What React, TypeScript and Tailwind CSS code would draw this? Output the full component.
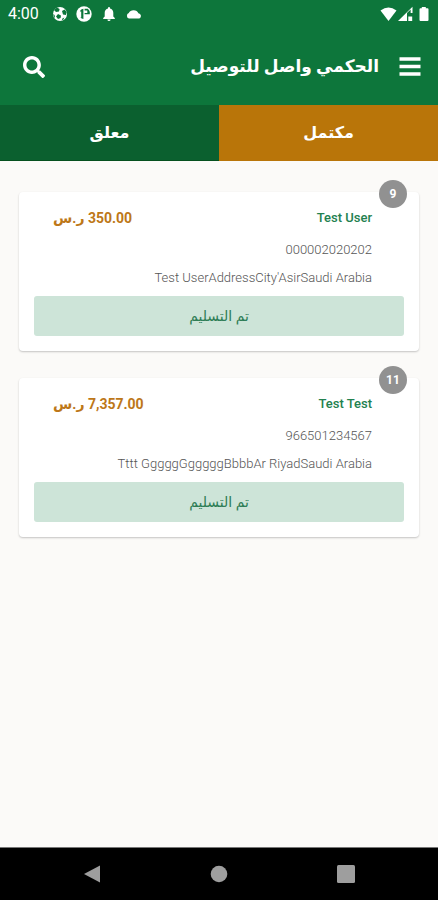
import { FaSearch } from "react-icons/fa";

interface Order {
  id: number;
  name: string;
  phone: string;
  address: string;
  price: string;
}

const orders: Order[] = [
  {
    id: 9,
    name: "Test User",
    phone: "000002020202",
    address: "Test UserAddressCity'AsirSaudi Arabia",
    price: "350.00",
  },
  {
    id: 11,
    name: "Test Test",
    phone: "966501234567",
    address: "Tttt GggggGgggggBbbbAr RiyadSaudi Arabia",
    price: "7,357.00",
  },
];

function StatusBar() {
  return (
    <div dir="ltr" className="flex h-7 items-center justify-between px-2 text-white">
      <div className="flex items-center">
        <span className="w-11 text-base leading-7">4:00</span>
        <svg className="size-4" viewBox="0 0 16 16" aria-hidden="true">
          <circle cx="8" cy="8" r="7" fill="currentColor" />
          <path
            d="M5 1.6 7.6 3 7 5.4 4 6 2 4ZM10 5l2.6-1.4L14.6 6 14 9l-3-.6ZM6 8l3 1.4L8.6 12 6 13 4 10.6ZM1.2 8l1.4 1 .4 2.4-1 .2ZM10.4 12.4l2-.8-1 2-1.6.6Z"
            fill="#0d763b"
          />
        </svg>
        <svg className="ml-2 size-4" viewBox="0 0 16 16" aria-hidden="true">
          <circle cx="8" cy="8" r="7.7" fill="currentColor" />
          <path
            d="M7.4 2.8C4.800 3 3.600 5 3.600 8s1.200 4.800 3.800 5.100V2.800ZM8.600 2.800h3.200a5 5 0 0 1 2 3.200v2.200H8.600V7h2.700V4.400H8.600Z"
            fill="#0d763b"
          />
          <path d="M2.500 5.500h2.700v6H2.500Z" fill="currentColor" />
        </svg>
        <svg className="ml-[9px] size-4" viewBox="0 0 16 16" aria-hidden="true">
          <path
            d="M8 1a1 1 0 0 1 1 1v.5c2 .5 3.300 2.200 3.300 4.300V10.500l1.500 1.600v.8H2.200v-.8l1.500-1.600V6.800C3.700 4.700 5 3 7 2.500V2a1 1 0 0 1 1-1ZM6.400 13.500h3.200a1.600 1.600 0 0 1-3.200 0Z"
            fill="currentColor"
          />
        </svg>
        <svg className="ml-[9px] size-4" viewBox="0 0 16 16" aria-hidden="true">
          <path
            d="M3 12.600a2.900 2.900 0 0 1-.2-5.500A5.200 4.800 0 0 1 12.400 7.300 2.800 2.800 0 0 1 13.400 12.600Z"
            fill="currentColor"
          />
        </svg>
      </div>
      <div className="flex items-center">
        <svg className="h-4 w-[17px]" viewBox="0 0 17 16" aria-hidden="true">
          <path d="M.5 4.500Q8.500-1.500 16.500 4.500L8.500 15Z" fill="currentColor" />
        </svg>
        <svg className="ml-px size-4" viewBox="0 0 16 16" aria-hidden="true">
          <path d="M0 15 14.500.8V7H9v8Z" fill="currentColor" />
          <path d="M9 8.500V7L12.600 3.600V7Z" fill="#0d763b" />
          <path d="M10.300 10.500h3.900v4.500h-3.900Z" fill="currentColor" />
        </svg>
        <svg className="ml-1 h-4 w-3" viewBox="0 0 12 16" aria-hidden="true">
          <path
            d="M3.800 1h4v1.300H9.500a1 1 0 0 1 1 1V14a1 1 0 0 1-1 1h-7a1 1 0 0 1-1-1V3.300a1 1 0 0 1 1-1h1.300Z"
            fill="currentColor"
          />
        </svg>
      </div>
    </div>
  );
}

function OrderCard({ order }: { order: Order }) {
  return (
    <li className="relative rounded bg-white px-[15px] pb-[15px] pt-3 shadow-[0_1px_2px_rgba(0,0,0,0.22)]">
      <span className="absolute -top-3 right-3 flex size-7 items-center justify-center rounded-full bg-[#919191] text-xs font-bold text-white">
        {order.id}
      </span>
      <div className="px-8">
        <div className="flex items-center justify-between">
          <h2 dir="ltr" className="text-[13px] font-medium leading-7 text-[#23814f]">
            {order.name}
          </h2>
          <p className="-ml-[13px] text-sm font-bold leading-7 text-[#bd7718]">
            <bdi>{order.price}</bdi> ر.س
          </p>
        </div>
        <p className="mt-1 text-[13px] font-light leading-7 text-[#555555]">
          <bdi>{order.phone}</bdi>
        </p>
        <p className="text-[13px] font-light leading-7 text-[#555555]">
          <bdi>{order.address}</bdi>
        </p>
      </div>
      <button
        type="button"
        className="mt-1 block h-10 w-full rounded-[3px] bg-[#cde4d8] text-sm font-medium text-[#2e7d55]"
      >
        تم التسليم
      </button>
    </li>
  );
}

export default function App() {
  return (
    <div
      dir="rtl"
      className="flex min-h-screen flex-col bg-[#fbfaf8] font-[Roboto,'DejaVu_Sans',sans-serif]"
    >
      <header className="bg-[#0d763b]">
        <StatusBar />
        <div className="flex h-[77px] items-center px-[17px] text-white">
          <button type="button" aria-label="القائمة">
            <svg className="size-[22px]" viewBox="0 0 22 22" aria-hidden="true">
              <path d="M.5 1.200h21v3.600H.5ZM.5 8.700h21v3.600H.5ZM.5 16.200h21v3.600H.5Z" fill="currentColor" />
            </svg>
          </button>
          <h1 className="mr-5 text-[17px] font-bold">الحكمي واصل للتوصيل</h1>
          <button type="button" aria-label="بحث" className="mr-auto ml-1.5">
            <FaSearch className="size-[22px]" />
          </button>
        </div>
      </header>

      <nav className="grid grid-cols-2 text-base font-bold text-white">
        <button type="button" className="h-14 bg-[#b97509]">
          مكتمل
        </button>
        <button type="button" className="h-14 border-b border-[#05501f] bg-[#0b602f]">
          معلق
        </button>
      </nav>

      <main className="flex-1 px-[19px] pt-[31px]">
        <ul className="flex flex-col gap-[27px]">
          {orders.map((order) => (
            <OrderCard key={order.id} order={order} />
          ))}
        </ul>
      </main>

      <footer
        dir="ltr"
        className="grid h-[53px] grid-cols-3 items-center border-t border-[#777777] bg-black px-7 text-[#9e9e9e]"
      >
        <button type="button" aria-label="رجوع" className="justify-self-center">
          <svg className="size-[18px]" viewBox="0 0 18 18" aria-hidden="true">
            <path d="M17 .5V17.500L1 9Z" fill="currentColor" />
          </svg>
        </button>
        <button type="button" aria-label="الرئيسية" className="justify-self-center">
          <svg className="size-[18px]" viewBox="0 0 18 18" aria-hidden="true">
            <circle cx="9" cy="9" r="8.300" fill="currentColor" />
          </svg>
        </button>
        <button type="button" aria-label="التطبيقات" className="justify-self-center">
          <svg className="size-[18px]" viewBox="0 0 18 18" aria-hidden="true">
            <rect width="18" height="18" rx="1.500" fill="currentColor" />
          </svg>
        </button>
      </footer>
    </div>
  );
}
